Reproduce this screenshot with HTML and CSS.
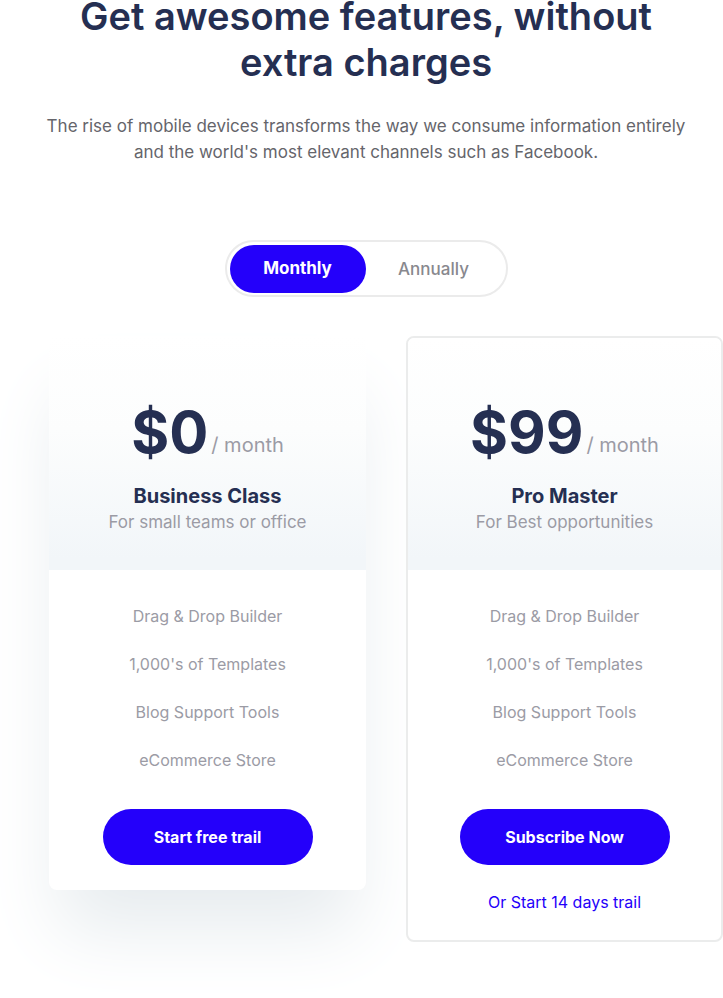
FILE: index.html
```html
<!DOCTYPE html>
<html lang="en">
<head>
<meta charset="utf-8">
<meta name="viewport" content="width=device-width, initial-scale=1">
<title>Pricing</title>
<link rel="stylesheet" href="styles.css">
</head>
<body>
<main class="pricing">
  <header class="intro">
    <h1 class="title">Get awesome features, without<br>extra charges</h1>
    <p class="lead">The rise of mobile devices transforms the way we consume information entirely<br>and the world's most elevant channels such as Facebook.</p>
    <div class="toggle">
      <button class="toggle-item active" type="button">Monthly</button>
      <button class="toggle-item" type="button">Annually</button>
    </div>
  </header>
  <div class="plans">
    <section class="plan raised">
      <div class="plan-head">
        <p class="price"><span class="amount">$0</span><span class="period">/ month</span></p>
        <h2 class="name">Business Class</h2>
        <p class="note">For small teams or office</p>
      </div>
      <div class="plan-body">
        <ul class="features">
          <li>Drag &amp; Drop Builder</li>
          <li>1,000's of Templates</li>
          <li>Blog Support Tools</li>
          <li>eCommerce Store</li>
        </ul>
        <button class="action" type="button">Start free trail</button>
      </div>
    </section>
    <section class="plan outlined">
      <div class="plan-head">
        <p class="price"><span class="amount">$99</span><span class="period">/ month</span></p>
        <h2 class="name">Pro Master</h2>
        <p class="note">For Best opportunities</p>
      </div>
      <div class="plan-body">
        <ul class="features">
          <li>Drag &amp; Drop Builder</li>
          <li>1,000's of Templates</li>
          <li>Blog Support Tools</li>
          <li>eCommerce Store</li>
        </ul>
        <button class="action" type="button">Subscribe Now</button>
        <a class="trial" href="#">Or Start 14 days trail</a>
      </div>
    </section>
  </div>
</main>
</body>
</html>
```
FILE: styles.css
```css
* {
  box-sizing: border-box;
}

body {
  margin: 0;
  background: #fff;
  color: #9b9ba5;
  font: 400 16px/26px Inter, "Open Sans", sans-serif;
}

h1, h2, p, ul {
  margin: 0;
  padding: 0;
}

button {
  border: 0;
  font: inherit;
  cursor: pointer;
}

.pricing {
  padding: 0 0 57px 49px;
}

.intro {
  display: flex;
  flex-direction: column;
  align-items: center;
  margin-right: 40px;
  text-align: center;
  white-space: nowrap;
}

.title {
  margin-top: -7px;
  color: #252f52;
  font-size: 38px;
  font-weight: 600;
  line-height: 46px;
}

.lead {
  margin-top: 28px;
  color: #65656b;
  font-size: 17px;
}

.toggle {
  display: flex;
  margin-top: 75px;
  padding: 3px 4px 2px 3px;
  border: 2px solid #ebebeb;
  border-radius: 29px;
}

.toggle-item {
  width: 136px;
  height: 48px;
  border-radius: 24px;
  background: transparent;
  color: #88888e;
  font-size: 17px;
  font-weight: 500;
}

.toggle-item.active {
  padding-bottom: 4px;
  background: #2400fa;
  color: #fff;
  font-weight: 700;
}

.plans {
  display: grid;
  grid-template-columns: 1fr 1fr;
  align-items: start;
  gap: 40px;
  margin-top: 39px;
  text-align: center;
}

.plan {
  overflow: hidden;
  border-radius: 8px;
  background: #fff;
}

.raised {
  box-shadow: 0 50px 70px -10px #e7ecef;
}

.outlined {
  border: 2px solid #ebecec;
}

.plan-head {
  height: 234px;
  padding-top: 64px;
  background: linear-gradient(#fff, #fcfdfd 40%, #f2f6f9 95%);
}

.outlined .plan-head {
  height: 232px;
  padding-top: 62px;
}

.price {
  display: flex;
  justify-content: center;
  align-items: flex-end;
  gap: 3px;
  line-height: 64px;
}

.amount {
  color: #252f52;
  font-size: 58px;
  font-weight: 700;
}

.period {
  font-size: 20px;
  line-height: 38px;
}

.name {
  margin-top: 18px;
  color: #252f52;
  font-size: 20px;
  font-weight: 700;
  line-height: 28px;
}

.note {
  font-size: 17px;
  line-height: 24px;
}

.plan-body {
  display: flex;
  flex-direction: column;
  align-items: center;
  padding: 33px 24px 25px;
}

.features {
  display: grid;
  gap: 22px;
  margin-bottom: 36px;
  list-style: none;
}

.action {
  width: 210px;
  height: 56px;
  border-radius: 28px;
  background: #2400fa;
  color: #fff;
  font-weight: 700;
}

.trial {
  margin-top: 24px;
  color: #2400fa;
  text-decoration: none;
}
```
